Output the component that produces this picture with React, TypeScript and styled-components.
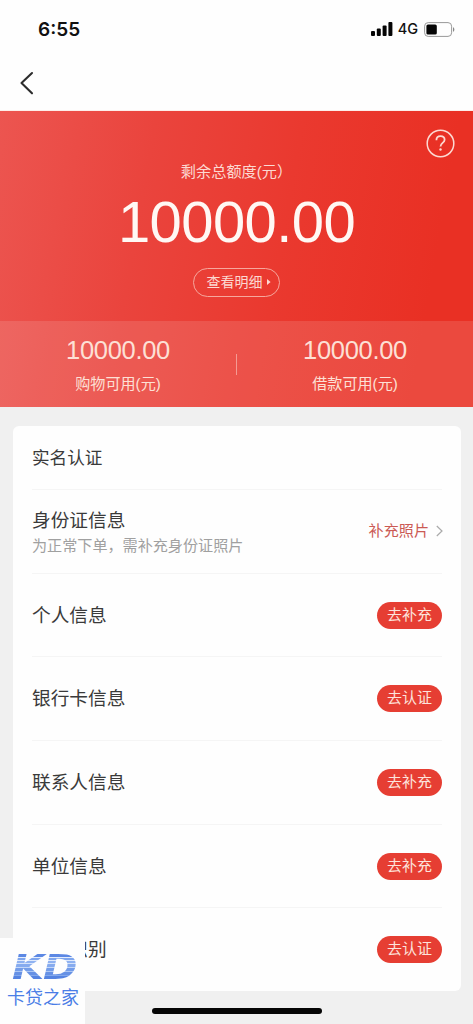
import React from 'react';
import styled, { createGlobalStyle } from 'styled-components';

const GlobalStyle = createGlobalStyle`
  * { box-sizing: border-box; }
  body { margin: 0; background: #f0f0f0; font-family: "Liberation Sans", "Noto Sans CJK SC", sans-serif; }
`;

const Screen = styled.main`
  position: relative;
  width: 473px;
  height: 1024px;
  overflow: hidden;
  display: flex;
  flex-direction: column;
  background: #f0f0f0;
`;

const StatusBar = styled.header`
  height: 58px;
  padding: 0 18px 0 38px;
  display: flex;
  align-items: center;
  justify-content: space-between;
  background: #fefefe;
  font-family: Inter, sans-serif;
  color: #111;
`;

const Clock = styled.span`
  font-size: 19px;
  font-weight: 600;
`;

const Indicators = styled.div`
  display: flex;
  align-items: center;
`;

const Network = styled.span`
  margin: 0 6px 0 5px;
  font-size: 14.5px;
  font-weight: 500;
  line-height: 20px;
`;

const NavBar = styled.nav`
  height: 53px;
  padding: 13px 0 0 19px;
  background: #fefefe;
  border-bottom: 1px solid #fdeeea;
`;

const Hero = styled.section`
  height: 296px;
  display: flex;
  flex-direction: column;
  background: linear-gradient(100deg, #ec5550 0%, #ea443d 30%, #ea392f 58%, #e93024 88%, #e93024 100%);
  color: #fff;
`;

const Total = styled.div`
  position: relative;
  height: 210px;
  padding-top: 50px;
  display: flex;
  flex-direction: column;
  align-items: center;
`;

const HelpButton = styled.button`
  position: absolute;
  top: 18px;
  right: 18px;
  width: 29px;
  height: 29px;
  padding: 0;
  border: 0;
  background: none;
`;

const TotalLabel = styled.div`
  height: 22px;
  font-size: 15.2px;
  line-height: 22px;
  color: #fcd9d2;
`;

const TotalAmount = styled.div`
  height: 64px;
  margin-top: 7px;
  font-size: 58px;
  line-height: 64px;
  letter-spacing: -0.6px;
  color: #fff8f4;
`;

const DetailButton = styled.button`
  width: 87px;
  height: 29px;
  margin-top: 14px;
  padding: 0 0 1px 4px;
  display: flex;
  align-items: center;
  justify-content: center;
  gap: 4px;
  border: 1px solid #f6a79d;
  border-radius: 15px;
  background: none;
  color: #fcd9d2;
  font: 14px/20px "Liberation Sans", "Noto Sans CJK SC", sans-serif;
`;

const Split = styled.div`
  flex: 1;
  display: flex;
  align-items: center;
  background: rgba(255, 255, 255, 0.12);
`;

const Quota = styled.div`
  flex: 1;
  height: 100%;
  padding-top: 14px;
  text-align: center;
  color: #fde0d6;
`;

const QuotaAmount = styled.div`
  font-size: 25.5px;
  line-height: 30px;
  letter-spacing: -0.3px;
`;

const QuotaLabel = styled.div`
  margin-top: 8px;
  font-size: 15.1px;
  line-height: 22px;
`;

const Separator = styled.div`
  width: 1px;
  height: 21px;
  background: #f49a93;
`;

const Card = styled.section`
  height: 565px;
  margin: 19px 12px 0 13px;
  padding: 0 19px;
  border-radius: 6px;
  background: #fefefe;
  color: #3a3a3a;
`;

const CardTitle = styled.h2`
  height: 63px;
  margin: 0;
  padding-top: 1px;
  font-size: 17.6px;
  font-weight: 400;
  line-height: 63px;
`;

const Row = styled.div`
  height: 83.7px;
  border-top: 1px solid #f5f5f5;
  display: flex;
  align-items: center;
  justify-content: space-between;
`;

const RowText = styled.div`
  padding-top: 2px;
`;

const RowTitle = styled.div`
  font-size: 18.7px;
  line-height: 27px;
`;

const RowHint = styled.div`
  font-size: 15.1px;
  line-height: 24px;
  color: #a0a0a0;
`;

const PhotoLink = styled.div`
  display: flex;
  align-items: center;
  gap: 7px;
  margin-right: -1px;
  font-size: 15.1px;
  line-height: 22px;
  color: #cb5a54;
`;

const Pill = styled.button`
  width: 65px;
  height: 27px;
  padding: 0 0 1px;
  border: 0;
  border-radius: 14px;
  background: #e63e33;
  color: #fde3dc;
  font: 15px/26px "Liberation Sans", "Noto Sans CJK SC", sans-serif;
`;

const Brand = styled.div`
  position: absolute;
  left: 0;
  bottom: 0;
  width: 85px;
  height: 86px;
  padding: 14px 0 0 7px;
  background: #fefefe;
`;

const BrandMark = styled.div`
  width: 60px;
  height: 32px;
  padding-left: 4px;
  transform: scaleX(1.26);
  transform-origin: 0 0;
  font-family: "DejaVu Sans", sans-serif;
  font-size: 33px;
  font-weight: 700;
  font-style: italic;
  line-height: 32px;
  letter-spacing: -1px;
  white-space: nowrap;
  color: transparent;
  background: linear-gradient(
    180deg,
    #5c88e4 0 5px,
    #e4edfc 5px 6px,
    #7fa6ee 6px 8px,
    #e0eafc 8px 9px,
    #8fb2f1 9px 11px,
    #d6e3fa 11px 12px,
    #86abef 12px 15px,
    #c4d7f8 15px 16px,
    #749de9 16px 19px,
    #adc7f4 19px 20px,
    #6691e5 20px 23px,
    #82a8ed 23px 24px,
    #5583e1 24px 32px
  );
  background-clip: text;
`;

const BrandName = styled.div`
  font-size: 18px;
  line-height: 26px;
  margin-top: 1px;
  color: #4a7de6;
`;

const HomeIndicator = styled.div`
  position: absolute;
  left: 152px;
  bottom: 10px;
  width: 170px;
  height: 6px;
  border-radius: 3px;
  background: #050505;
`;

const rows = [
  { title: '个人信息', action: '去补充' },
  { title: '银行卡信息', action: '去认证' },
  { title: '联系人信息', action: '去补充' },
  { title: '单位信息', action: '去补充' },
  { title: '人脸识别', action: '去认证' },
];

export default function App() {
  return (
    <Screen>
      <GlobalStyle />
      <StatusBar>
        <Clock>6:55</Clock>
        <Indicators>
          <svg width="22" height="14" viewBox="0 0 22 14" fill="#050505">
            <rect x="0" y="9" width="4" height="5" rx="1" />
            <rect x="5.8" y="6.5" width="4" height="7.5" rx="1" />
            <rect x="11.6" y="3.5" width="4" height="10.5" rx="1" />
            <rect x="17.4" y="0" width="4" height="14" rx="1" />
          </svg>
          <Network>4G</Network>
          <svg width="31" height="15" viewBox="0 0 31 15">
            <rect x="0.6" y="0.6" width="27" height="13.8" rx="3.6" fill="none" stroke="#999" strokeWidth="1" />
            <rect x="2.4" y="2.5" width="10.4" height="10" rx="1.6" fill="#050505" />
            <path d="M29 5.2c1.8.7 1.8 3.9 0 4.6z" fill="#888" />
          </svg>
        </Indicators>
      </StatusBar>
      <NavBar>
        <svg width="16" height="24" viewBox="0 0 16 24" fill="none" stroke="#2c2c2c" strokeWidth="2.1" strokeLinecap="round" strokeLinejoin="round">
          <path d="M13 2L2.5 12L13 22.3" />
        </svg>
      </NavBar>
      <Hero>
        <Total>
          <HelpButton aria-label="帮助">
            <svg width="29" height="29" viewBox="0 0 29 29" fill="none" stroke="#fcd9d2">
              <circle cx="14.5" cy="14.5" r="13.3" strokeWidth="1.5" />
              <path d="M10.4 11.2c0-2.5 1.7-4 4.1-4s4.1 1.4 4.1 3.6c0 3.1-4.1 3.2-4.1 6.7" strokeWidth="1.8" />
              <circle cx="14.5" cy="20.5" r="1.2" fill="#fcd9d2" stroke="none" />
            </svg>
          </HelpButton>
          <TotalLabel>剩余总额度(元）</TotalLabel>
          <TotalAmount>10000.00</TotalAmount>
          <DetailButton>
            查看明细
            <svg width="4" height="6" viewBox="0 0 4 6" fill="#fcd9d2">
              <path d="M0 0L3.6 3L0 6z" />
            </svg>
          </DetailButton>
        </Total>
        <Split>
          <Quota>
            <QuotaAmount>10000.00</QuotaAmount>
            <QuotaLabel>购物可用(元)</QuotaLabel>
          </Quota>
          <Separator />
          <Quota>
            <QuotaAmount>10000.00</QuotaAmount>
            <QuotaLabel>借款可用(元)</QuotaLabel>
          </Quota>
        </Split>
      </Hero>
      <Card>
        <CardTitle>实名认证</CardTitle>
        <Row>
          <RowText>
            <RowTitle>身份证信息</RowTitle>
            <RowHint>为正常下单，需补充身份证照片</RowHint>
          </RowText>
          <PhotoLink>
            补充照片
            <svg width="7" height="12" viewBox="0 0 7 12" fill="none" stroke="#aaa" strokeWidth="1.2">
              <path d="M0.8 1L6 6L0.8 11" />
            </svg>
          </PhotoLink>
        </Row>
        {rows.map((row) => (
          <Row key={row.title}>
            <RowTitle>{row.title}</RowTitle>
            <Pill>{row.action}</Pill>
          </Row>
        ))}
      </Card>
      <Brand>
        <BrandMark>KD</BrandMark>
        <BrandName>卡贷之家</BrandName>
      </Brand>
      <HomeIndicator />
    </Screen>
  );
}
